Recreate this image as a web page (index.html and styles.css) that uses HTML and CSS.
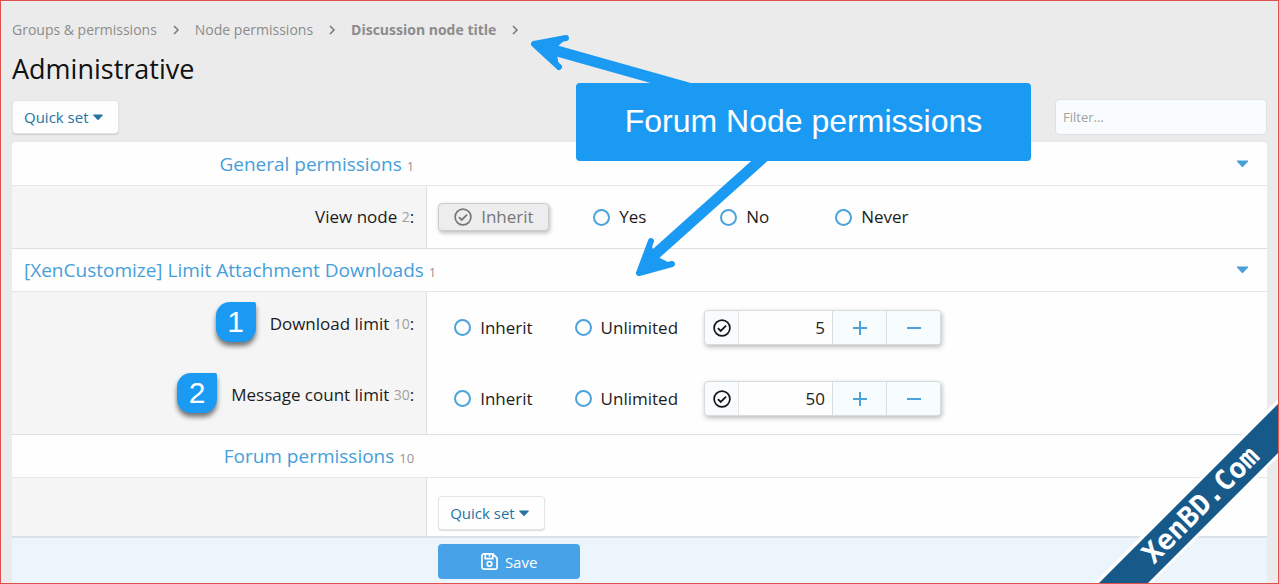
FILE: index.html
```html
<!DOCTYPE html>
<html lang="en">
<head>
<meta charset="utf-8">
<title>Administrative</title>
<link rel="stylesheet" href="styles.css">
</head>
<body>
<svg class="defs" aria-hidden="true">
  <symbol id="chevron" viewBox="0 0 8 10"><path d="M2 1l4 4-4 4" fill="none" stroke="currentColor" stroke-width="1.5"/></symbol>
  <symbol id="caret" viewBox="0 0 12 8"><path d="M.5.5h11v1L6.7 6.8q-.7.7-1.4 0L.5 1.500z" fill="currentColor"/></symbol>
  <symbol id="check" viewBox="0 0 18 18"><circle cx="9" cy="9" r="7.900" fill="none" stroke="currentColor" stroke-width="1.700"/><path d="M4.900 9.200l2.800 2.800 5.400-5.400" fill="none" stroke="currentColor" stroke-width="1.800"/></symbol>
</svg>
<div class="page">
  <nav class="crumbs">
    <a href="#">Groups &amp; permissions</a><svg><use href="#chevron"/></svg>
    <a href="#">Node permissions</a><svg><use href="#chevron"/></svg>
    <a href="#" class="current">Discussion node title</a><svg><use href="#chevron"/></svg>
  </nav>
  <h1>Administrative</h1>
  <div class="toolbar">
    <button type="button" class="menu-button">Quick set<svg><use href="#caret"/></svg></button>
    <input class="filter" type="text" placeholder="Filter..." aria-label="Filter">
  </div>

  <form class="panel">
    <section>
      <h2><span class="title">General permissions <small>1</small></span><button type="button" class="toggle" aria-label="Toggle general permissions"><svg><use href="#caret"/></svg></button></h2>
      <div class="row first">
        <div class="label">View node&nbsp;<small>2</small>:</div>
        <div class="control choices">
          <label class="option chosen"><input type="radio" name="view" checked><svg><use href="#check"/></svg>Inherit</label>
          <label class="option"><input type="radio" name="view">Yes</label>
          <label class="option"><input type="radio" name="view">No</label>
          <label class="option"><input type="radio" name="view">Never</label>
        </div>
      </div>
    </section>
    <section>
      <h2><span class="title wide">[XenCustomize] Limit Attachment Downloads <small>1</small></span><button type="button" class="toggle" aria-label="Toggle attachment limits"><svg><use href="#caret"/></svg></button></h2>
      <div class="row">
        <div class="label"><span class="marker">1</span>Download limit&nbsp;<small>10</small>:</div>
        <div class="control limits">
          <label class="option"><input type="radio" name="download">Inherit</label>
          <label class="option"><input type="radio" name="download">Unlimited</label>
          <div class="stepper">
            <label class="pick"><input type="radio" name="download" checked aria-label="Download limit value"><svg><use href="#check"/></svg></label>
            <input class="number" type="text" value="5" aria-label="Download limit">
            <button type="button" aria-label="Increase"><svg viewBox="0 0 14 14"><path d="M0 7h14M7 0v14"/></svg></button>
            <button type="button" aria-label="Decrease"><svg viewBox="0 0 14 14"><path d="M0 7h14"/></svg></button>
          </div>
        </div>
      </div>
      <div class="row">
        <div class="label"><span class="marker">2</span>Message count limit&nbsp;<small>30</small>:</div>
        <div class="control limits">
          <label class="option"><input type="radio" name="messages">Inherit</label>
          <label class="option"><input type="radio" name="messages">Unlimited</label>
          <div class="stepper">
            <label class="pick"><input type="radio" name="messages" checked aria-label="Message count value"><svg><use href="#check"/></svg></label>
            <input class="number" type="text" value="50" aria-label="Message count limit">
            <button type="button" aria-label="Increase"><svg viewBox="0 0 14 14"><path d="M0 7h14M7 0v14"/></svg></button>
            <button type="button" aria-label="Decrease"><svg viewBox="0 0 14 14"><path d="M0 7h14"/></svg></button>
          </div>
        </div>
      </div>
    </section>
    <section>
      <h2><span class="title">Forum permissions <small>10</small></span></h2>
      <div class="row quick">
        <div class="label"></div>
        <div class="control"><button type="button" class="menu-button">Quick set<svg><use href="#caret"/></svg></button></div>
      </div>
    </section>
    <div class="submit">
      <button type="submit" class="save"><svg viewBox="0 0 18 18"><path d="M3 1h9.500L17 5.500V15a2 2 0 0 1-2 2H3a2 2 0 0 1-2-2V3a2 2 0 0 1 2-2zM4.500 1v5h8V1M9 1v3"/><circle cx="9" cy="11.500" r="2.500"/></svg>Save</button>
    </div>
  </form>
</div>

<svg class="arrows" viewBox="0 0 520 250" aria-hidden="true">
  <path d="M172 59L30 19" stroke-width="11"/>
  <path class="head" d="M14 14L47 8L36 18L39 37z"/>
  <path class="barb" d="M14 14L46 8M14 14L39 37"/>
  <path d="M246 125L131 228" stroke-width="11"/>
  <path class="head" d="M119 243L131 211L134 225L152 234z"/>
  <path class="barb" d="M119 243L131 211M119 243L152 234"/>
</svg>
<div class="callout">Forum Node permissions</div>
<svg class="ribbon" viewBox="0 0 186 186">
  <path d="M0 186L186 0V58L58 186z" fill="#fff"/>
  <path d="M5 186L186 5V54L54 186z" fill="#175a8a"/>
  <text x="0" y="0" transform="translate(108 107) rotate(-45)" dy="9" text-anchor="middle">XenBD.Com</text>
</svg>
</body>
</html>
```
FILE: styles.css
```css
* { box-sizing: border-box; }
body {
  margin: 0;
  min-height: 100vh;
  position: relative;
  overflow: hidden;
  display: flex;
  border: 1px solid #e0504c;
  background: #ebebeb;
  color: #1c1c1c;
  font: 17px/28px "Segoe UI", "Open Sans", "Noto Sans", sans-serif;
}
button, input { font: inherit; margin: 0; }
button { cursor: pointer; }
.defs { position: absolute; width: 0; height: 0; }
.page { flex: 1; display: flex; flex-direction: column; padding: 17px 11px 0; }

.crumbs { display: flex; align-items: center; font-size: 14px; line-height: 24px; }
.crumbs a { color: #8c8c8c; text-decoration: none; }
.crumbs .current { font-weight: 700; }
.crumbs svg { width: 8px; height: 10px; margin: 0 15px; color: #777; }
h1 { margin: 8px 0 11px; font-size: 27px; line-height: 38px; font-weight: 400; color: #111; }

.toolbar { display: flex; justify-content: space-between; align-items: center; height: 36px; margin-bottom: 7px; }
.menu-button {
  display: inline-flex; align-items: center; gap: 4px;
  height: 34px; padding: 0 15px 0 11px;
  border: 1px solid #e2e4e5; border-radius: 4px;
  background: #fefefe; color: #2673a3; font-size: 15px;
  box-shadow: 0 1px 1px #0002;
}
.menu-button svg { width: 10px; height: 7px; }
.filter {
  width: 212px; height: 36px; padding: 0 7px;
  border: 1px solid #dee2e4; border-radius: 4px;
  background: #f9fcfe; font-size: 13px;
}
.filter::placeholder { color: #a0a0a0; opacity: 1; }

.panel { flex: 1; display: flex; flex-direction: column; border-radius: 4px 4px 0 0; background: #fefefe; overflow: hidden; }
h2 {
  display: flex; align-items: center; margin: 0; height: 44px;
  border-bottom: 1px solid #e6e8e8; color: #469fd9;
  font-size: 19px; font-weight: 400;
}
section + section h2 { border-top: 1px solid #dcdfe0; }
.title { width: 33%; padding: 2px 12px 0 0; text-align: right; white-space: nowrap; }
.title.wide { width: auto; padding-left: 12px; }
small { font-size: 13px; color: #949494; }
.label small { font-size: 14px; color: #a0a0a0; }
.toggle { margin-left: auto; padding: 0 18px 0 0; border: 0; background: none; color: #469fd9; line-height: 0; }
.toggle svg { width: 13px; height: 8px; }

.row { display: flex; }
.label {
  width: calc(33% + 1px); display: flex; justify-content: flex-end; align-items: flex-start;
  padding: 18px 12px 16px 0; background: #f5f5f5; border-right: 1px solid #e2e2e2;
}
.control { flex: 1; padding: 18px 11px; }
.first .label, .first .control { padding-top: 17px; padding-bottom: 17px; }
.marker {
  width: 40px; height: 40px; margin: -8px 14px -4px 0;
  border-radius: 14px 2px 14px 14px; background: #1a9af2; color: #fff;
  font: 30px/40px "Liberation Sans", Arial, sans-serif; text-align: center;
  box-shadow: 0 4px 5px #0008;
}
.choices { display: grid; grid-template-columns: 139px 127px 115px auto; justify-content: start; }
.limits { display: flex; gap: 10px; align-items: center; }
.option { display: flex; align-items: center; gap: 9px; height: 28px; padding: 0 16px; white-space: nowrap; }
.option input { appearance: none; width: 17px; height: 17px; border: 2px solid #4aa3db; border-radius: 50%; }
.option svg, .pick svg { width: 18px; height: 18px; }
.chosen {
  justify-self: start; padding: 0 14px 0 15px; border: 1px solid #ccc; border-radius: 4px;
  background: #ededed; color: #777; box-shadow: 1px 2px 4px #0004;
}
.option.chosen input, .pick input { appearance: none; position: absolute; opacity: 0; }
.stepper {
  display: flex; height: 35px; border: 1px solid #d8dcde; border-radius: 4px;
  background: #f8fcfe; box-shadow: 1px 2px 5px #0004; overflow: hidden;
}
.pick { width: 33px; display: grid; place-items: center; color: #151515; }
.number { width: 94px; padding: 0 7px; border: 0; border-left: 1px solid #e2e6e8; background: #fefefe; color: #222; text-align: right; }
.stepper button { width: 54px; padding: 0; border: 0; border-left: 1px solid #d8dfe3; background: #f7fcff; line-height: 0; }
.stepper button svg { width: 14px; height: 14px; stroke: #4aa3db; stroke-width: 2; }
.quick .label, .quick .control { padding-top: 18px; padding-bottom: 6px; }
.quick .control { display: flex; }
.submit { flex: 1; padding: 6px 0 4px calc(33% + 12px); border-top: 2px solid #dbe2e5; background: #edf5fc; }
.save {
  display: flex; align-items: center; justify-content: center; gap: 7px;
  width: 142px; height: 35px; padding: 0; border: 0; border-radius: 4px;
  background: #47a2e8; color: #fff; font-size: 15px;
}
.save svg { width: 17px; height: 17px; fill: none; stroke: #fff; stroke-width: 1.8; }

.arrows { position: absolute; left: 519px; top: 29px; width: 520px; height: 250px; fill: none; stroke: #1a9af2; pointer-events: none; }
.arrows .head { fill: #1a9af2; stroke: none; }
.arrows .barb { stroke-width: 6; stroke-linecap: round; stroke-linejoin: round; }
.callout {
  position: absolute; left: 575px; top: 82px; width: 455px; height: 78px;
  border-radius: 4px; background: #1a9af2; color: #fff;
  font: 32px/76px "Liberation Sans", Arial, sans-serif; text-align: center;
}
.ribbon { position: absolute; right: -1px; bottom: -1px; width: 186px; height: 186px; }
.ribbon text { fill: #fff; font: 700 28px "DejaVu Sans Mono", monospace; }
```
